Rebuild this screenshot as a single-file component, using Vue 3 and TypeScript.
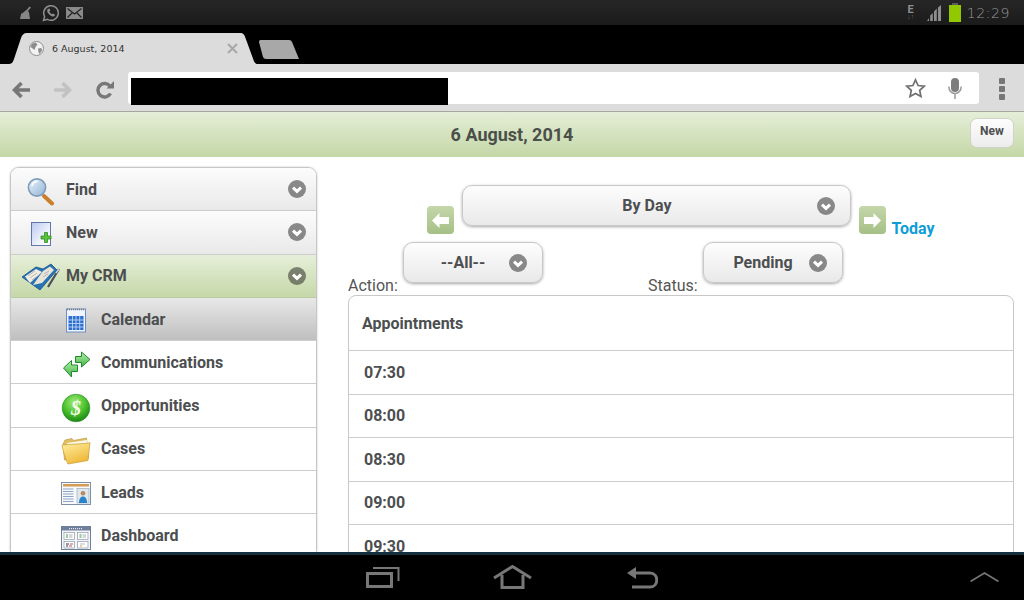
<script setup lang="ts">
const topItems = [
  { label: 'Find', icon: 'find', kind: '' },
  { label: 'New', icon: 'new', kind: '' },
  { label: 'My CRM', icon: 'crm', kind: 'is-open' },
]

const subItems = [
  { label: 'Calendar', icon: 'cal', kind: 'is-current' },
  { label: 'Communications', icon: 'comm', kind: '' },
  { label: 'Opportunities', icon: 'opp', kind: '' },
  { label: 'Cases', icon: 'cases', kind: '' },
  { label: 'Leads', icon: 'leads', kind: '' },
  { label: 'Dashboard', icon: 'dash', kind: '' },
]

const times = ['07:30', '08:00', '08:30', '09:00', '09:30']
</script>

<template>
  <div class="device">
    <!-- shared icon sprite -->
    <svg class="sprite" aria-hidden="true">
      <defs>
        <linearGradient id="g-lens" x1="0" y1="0" x2="1" y2="1">
          <stop offset="0" stop-color="#eaf3fb" />
          <stop offset="1" stop-color="#8fb4d6" />
        </linearGradient>
        <linearGradient id="g-page" x1="0" y1="0" x2="1" y2="1">
          <stop offset="0" stop-color="#b9c8ee" />
          <stop offset="0.7" stop-color="#f6f8fe" />
          <stop offset="1" stop-color="#ffffff" />
        </linearGradient>
        <linearGradient id="g-arrow" x1="0" y1="0" x2="0" y2="1">
          <stop offset="0" stop-color="#b8f0b0" />
          <stop offset="1" stop-color="#3fb33f" />
        </linearGradient>
        <radialGradient id="g-ball" cx="0.45" cy="0.3" r="0.75">
          <stop offset="0" stop-color="#a4ec7c" />
          <stop offset="0.55" stop-color="#49c02c" />
          <stop offset="1" stop-color="#157d12" />
        </radialGradient>
        <linearGradient id="g-folder" x1="0" y1="0" x2="0.5" y2="1">
          <stop offset="0" stop-color="#fff0a4" />
          <stop offset="1" stop-color="#f0b93a" />
        </linearGradient>
        <linearGradient id="g-nav" x1="0" y1="0" x2="0" y2="1">
          <stop offset="0" stop-color="#c2d6a6" />
          <stop offset="1" stop-color="#a3bd82" />
        </linearGradient>
      </defs>

      <symbol id="i-chev" viewBox="0 0 18 18">
        <circle cx="9" cy="9" r="9" fill="#000" fill-opacity="0.44" />
        <path d="M5 7.6 9 11.4 13 7.6" fill="none" stroke="#fff" stroke-width="3" />
      </symbol>

      <symbol id="i-find" viewBox="0 0 40 34">
        <path d="M23 24 31 31.5" stroke="#c97f2c" stroke-width="4" stroke-linecap="round" />
        <circle cx="16" cy="15.5" r="8.6" fill="url(#g-lens)" stroke="#7f9db8" stroke-width="1.6" />
        <path d="M11 14c.6-3 2.800-4.600 5.600-4.600" fill="none" stroke="#fff" stroke-width="1.6" />
      </symbol>

      <symbol id="i-new" viewBox="0 0 40 34">
        <rect x="10.500" y="7.500" width="19" height="23" fill="url(#g-page)" stroke="#5f78a8" />
        <path d="M21 20h3.500v-3.500h3V20H31v3h-3.500v3.500h-3V23H21z" fill="#5cc33c" stroke="#2c8a22" stroke-width=".8" transform="translate(-1 1)" />
      </symbol>

      <symbol id="i-crm" viewBox="0 0 40 34">
        <path d="M1 18 15 8l7 2 8-5 6 6-17 20z" fill="#2774b4" stroke="#174f86" stroke-width=".8" />
        <path d="M4 17.500 15 10l6 3-12 11z" fill="#f2ede0" />
        <path d="M22 12l7-4.500 4 3.500-12 13-9 2z" fill="#e7e4d8" />
        <path d="M7 17l7-5M9 19l7-5M11 21l7-5M23 15l5-3M22 18l5-3" stroke="#a9a9b4" stroke-width=".8" />
        <path d="M38 10 27 28" stroke="#4a4f5c" stroke-width="2.200" />
        <path d="M38 10 35 14" stroke="#c9d4dc" stroke-width="1.400" />
      </symbol>

      <symbol id="i-cal" viewBox="0 0 40 34">
        <rect x="10.500" y="7" width="19" height="23" fill="#f0f4fc" stroke="#6d8ec4" />
        <path d="M11 7.500h18" stroke="#777" stroke-width="1.500" stroke-dasharray="1 1" />
        <rect x="12.500" y="14" width="15" height="14" fill="#2d6fd0" />
        <path d="M12.500 18h15M12.500 21.500h15M12.500 25h15M16.500 14v14M20 14v14M23.700 14v14" stroke="#cfe0f8" stroke-width=".8" />
      </symbol>

      <symbol id="i-comm" viewBox="0 0 40 34">
        <path d="M19.500 11.500h6V7l8.500 7.500-8.500 7.500v-4.500h-6z" fill="url(#g-arrow)" stroke="#1f8a2c" />
        <path d="M21.500 20h-6v-4.500L7.500 23l8 9v-5.500h6z" fill="url(#g-arrow)" stroke="#1f8a2c" />
      </symbol>

      <symbol id="i-opp" viewBox="0 0 40 34">
        <circle cx="20" cy="19" r="13.800" fill="url(#g-ball)" stroke="#1c8a18" stroke-width=".6" />
        <text x="20" y="25.500" text-anchor="middle" class="dollar">$</text>
      </symbol>

      <symbol id="i-cases" viewBox="0 0 40 34">
        <path d="M7 12l2-4 7-1.500 1.500 2 13-2.500 2 20-24 2z" fill="#e2bd62" stroke="#b6923a" stroke-width=".6" />
        <path d="M11 11l20-3-1 16-17 2z" fill="#fdf9e6" />
        <path d="M6 13l22-1.500c3 0 6-1 6-1l-2 18-20 3.500c-3-6-5-13-6-19z" fill="url(#g-folder)" stroke="#c99c34" stroke-width=".7" />
      </symbol>

      <symbol id="i-leads" viewBox="0 0 40 34">
        <rect x="5.500" y="7.500" width="29" height="22" fill="#f7f9fc" stroke="#7f8fa4" />
        <rect x="7" y="9" width="26" height="2.500" fill="#d49c55" />
        <path d="M7 14h10.500M7 16.500h10.500M7 19h10.500M7 21.500h10.500M7 24h10.500M7 26.500h10.500" stroke="#8ea4c4" />
        <rect x="21" y="13.500" width="12" height="14.500" fill="#dfe8f0" stroke="#8ea0b4" stroke-width=".6" />
        <circle cx="27" cy="18.200" r="2.300" fill="#b58a5c" />
        <path d="M23 28c0-5 2-6.500 4-6.500s4 1.500 4 6.500z" fill="#2a82c8" />
      </symbol>

      <symbol id="i-dash" viewBox="0 0 40 34">
        <rect x="5.500" y="7.500" width="29" height="23" fill="#f5f6fa" stroke="#6f7f98" />
        <rect x="6" y="8" width="28" height="3.500" fill="#6f7f9c" />
        <path d="M13 9.700h14" stroke="#fff" stroke-dasharray="1 1" />
        <g fill="#fff" stroke="#8e98a8" stroke-width=".7">
          <rect x="8" y="13.500" width="10.500" height="7" />
          <rect x="21.500" y="13.500" width="10.500" height="7" />
          <rect x="8" y="22.500" width="10.500" height="6.500" />
          <rect x="21.500" y="22.500" width="10.500" height="6.500" />
        </g>
        <path d="M10 16h2M10 18h2M23.500 16h2M23.500 18h2" stroke="#2e9a3c" />
        <path d="M13 16h3.500M13 18h3.500M26.500 16h3.500M26.500 18h3.500" stroke="#a8b0bc" />
        <path d="M10 25h3M10 27h2" stroke="#23304a" />
        <path d="M14 25h3M13 27h3" stroke="#c4504c" />
        <path d="M24 25h5" stroke="#b4bcc8" />
        <path d="M24 27h2" stroke="#e0a030" />
      </symbol>
    </svg>

    <!-- android status bar -->
    <div class="status">
      <div class="status-left">
        <svg width="14" height="14" viewBox="0 0 14 14">
          <path d="M1 13l1-5 3-2 1-1 1.500-1L10.500 0.500l1.500 1-3 3.500 1 1.500 1 6.500z" fill="#858585" />
        </svg>
        <svg width="18" height="18" viewBox="0 0 18 18">
          <path d="M1.500 16.500l1.100-4A7.300 7.300 0 1 1 5.500 15.400z" fill="none" stroke="#8e8e8e" stroke-width="1.500" />
          <path d="M6 5c-1.400 1-1 3 .6 4.800C8.300 11.800 10.500 13 12 12.200c1-.6 1.200-1.400.8-1.800l-1.800-1-1 .9c-1-.4-2-1.400-2.600-2.700l.9-1-.9-2z" fill="#8e8e8e" />
        </svg>
        <svg width="17" height="12" viewBox="0 0 17 12">
          <rect width="17" height="12" fill="#8a8a8a" />
          <path d="M1.500 1.500 8.500 7l7-5.500M1.500 10.500 6.500 5.500M15.500 10.500l-5-5" fill="none" stroke="#222" stroke-width="1.200" />
        </svg>
      </div>
      <div class="status-right">
        <div class="net"><span>E</span><small>↓↑</small></div>
        <svg class="signal" width="17" height="16" viewBox="0 0 17 16">
          <path d="M0 16l2-3v3zM3.200 16v-5.500l2.600-2.500V16zM7 16V6.500l2.800-3V16zM11 16V2.500L14 0v16z" fill="#8d8d8d" />
        </svg>
        <svg class="battery" width="12" height="19" viewBox="0 0 12 19">
          <rect x="3" width="6" height="2" fill="#5d5d5d" />
          <rect y="2" width="12" height="17" fill="#91c800" />
        </svg>
        <span class="clock">12:29</span>
      </div>
    </div>

    <!-- chrome tab strip -->
    <div class="tabs">
      <div class="tab">
        <svg class="tab-bg" width="250" height="31" viewBox="0 0 250 31">
          <path d="M0 31c4 0 5-2 6-5l7-21c1-3 2.500-5 6-5h213c3.500 0 4.500 2 5.500 5l8 22c1 2.500 2 4 4.500 4z" fill="#dcdcdc" />
        </svg>
        <svg class="globe" width="15" height="15" viewBox="0 0 15 15">
          <circle cx="7.500" cy="7.500" r="7" fill="#f2f2f2" stroke="#8c8c8c" />
          <path d="M3 2.800 6.500 1.500l2 2-2 2.500-1 3L3 7 1.500 6zM9 7.500l3.500-.5.500 2.500-2.500 3.500-1-2z" fill="#8c8c8c" />
        </svg>
        <span class="tab-title">6 August, 2014</span>
        <svg class="tab-close" width="11" height="11" viewBox="0 0 11 11">
          <path d="M1 1l9 9M10 1l-9 9" stroke="#a9a9a9" stroke-width="2.200" />
        </svg>
      </div>
      <svg class="new-tab" width="40" height="19" viewBox="0 0 40 19">
        <path d="M0 2c0-1.500 1-2 2-2h28c1.500 0 2.500.8 3 2l7 17H7c-1.500 0-2.400-.8-3-2z" fill="#a8a8a8" />
      </svg>
    </div>

    <!-- chrome toolbar -->
    <div class="toolbar">
      <div class="tool-nav">
        <svg width="18" height="18" viewBox="0 0 18 18">
          <path d="M18 9H3M9.500 2 2.500 9l7 7" fill="none" stroke="#777" stroke-width="3.600" />
        </svg>
        <svg width="18" height="18" viewBox="0 0 18 18">
          <path d="M0 9h15M8.500 2l7 7-7 7" fill="none" stroke="#c2c2c2" stroke-width="3.600" />
        </svg>
        <svg width="18" height="18" viewBox="0 0 18 18">
          <path d="M14.500 12.500A6.700 6.700 0 1 1 14 5.200" fill="none" stroke="#777" stroke-width="3.400" />
          <path d="M10.500 7.500H18V0z" fill="#777" />
        </svg>
      </div>
      <div class="omnibox">
        <div class="redacted"></div>
        <svg width="21" height="20" viewBox="0 0 21 20">
          <path d="M10.500 1.800l2.600 5.700 6.200.7-4.600 4.200 1.300 6.100-5.500-3.100-5.500 3.100 1.300-6.100-4.600-4.200 6.200-.7z" fill="none" stroke="#6f6f6f" stroke-width="1.700" />
        </svg>
        <svg width="14" height="21" viewBox="0 0 14 21">
          <rect x="3" width="8" height="14" rx="4" fill="#7d7d7d" />
          <path d="M.8 8.500c0 4 2.600 7 6.200 7s6.200-3 6.200-7M7 15.500V21" fill="none" stroke="#9a9a9a" stroke-width="1.500" />
        </svg>
      </div>
      <div class="menu-dots"><i></i><i></i><i></i></div>
    </div>

    <div class="page-head">
      <h1>6 August, 2014</h1>
      <button class="new-btn">New</button>
    </div>

    <div class="content">
      <nav class="sidebar">
        <a v-for="item in topItems" :key="item.label" class="row" :class="item.kind">
          <span class="row-icon"><svg width="40" height="34"><use :href="'#i-' + item.icon" /></svg></span>
          <span class="row-label">{{ item.label }}</span>
          <svg class="chev" width="18" height="18"><use href="#i-chev" /></svg>
        </a>
        <a v-for="item in subItems" :key="item.label" class="row sub" :class="item.kind">
          <span class="row-icon"><svg width="40" height="34"><use :href="'#i-' + item.icon" /></svg></span>
          <span class="row-label">{{ item.label }}</span>
        </a>
      </nav>

      <main class="main">
        <div class="period-row">
          <button class="arrow-btn">
            <svg width="17" height="15" viewBox="0 0 17 15"><path d="M0 7.500 7.500 0v4H17v7H7.500v4z" fill="#fff" /></svg>
          </button>
          <div class="select period">
            <span>By Day</span>
            <svg class="select-chev" width="18" height="18"><use href="#i-chev" /></svg>
          </div>
          <button class="arrow-btn">
            <svg width="17" height="15" viewBox="0 0 17 15"><path d="M17 7.500 9.500 0v4H0v7h9.500v4z" fill="#fff" /></svg>
          </button>
          <a class="today">Today</a>
        </div>

        <div class="filter-row">
          <div class="filter">
            <label>Action:</label>
            <div class="select small">
              <span>--All--</span>
              <svg class="select-chev" width="18" height="18"><use href="#i-chev" /></svg>
            </div>
          </div>
          <div class="filter">
            <label>Status:</label>
            <div class="select small">
              <span>Pending</span>
              <svg class="select-chev" width="18" height="18"><use href="#i-chev" /></svg>
            </div>
          </div>
        </div>

        <section class="agenda">
          <div class="agenda-head">Appointments</div>
          <div v-for="t in times" :key="t" class="agenda-row">{{ t }}</div>
        </section>
      </main>
    </div>

    <!-- android nav bar -->
    <div class="navbar">
      <svg class="nav-recent" width="34" height="23" viewBox="0 0 34 23">
        <path d="M1.500 8.500h24v13h-24z" fill="none" stroke="#777" stroke-width="3" />
        <path d="M7 3h25.500v13" fill="none" stroke="#777" stroke-width="2" />
      </svg>
      <svg class="nav-home" width="39" height="24" viewBox="0 0 39 24">
        <path d="M1 13 19.500 1.500 38 13" fill="none" stroke="#777" stroke-width="3" />
        <path d="M9 10v12.500h21V10" fill="none" stroke="#777" stroke-width="3" />
      </svg>
      <svg class="nav-back" width="31" height="22" viewBox="0 0 31 22">
        <path d="M0 6 9 0v12z" fill="#777" />
        <path d="M6 6h17c9 0 9 14 0 14H5" fill="none" stroke="#777" stroke-width="3" />
      </svg>
      <svg class="nav-up" width="29" height="10" viewBox="0 0 29 10">
        <path d="M.5 9.500 14.500 1l14 8.500" fill="none" stroke="#777" stroke-width="1.600" />
      </svg>
    </div>
  </div>
</template>

<style>
html,
body {
  margin: 0;
  background: #fff;
}
</style>

<style scoped>
.device {
  width: 1024px;
  height: 600px;
  display: flex;
  flex-direction: column;
  overflow: hidden;
  font-family: Roboto, "Liberation Sans", sans-serif;
  color: #4c4e50;
  background: #fff;
}

.sprite {
  width: 0;
  height: 0;
  flex: none;
}

.dollar {
  font-family: "Liberation Serif", serif;
  font-style: italic;
  font-weight: 700;
  font-size: 20px;
  fill: #f4fbe8;
}

/* status bar */
.status {
  height: 25px;
  flex: none;
  display: flex;
  justify-content: space-between;
  background: linear-gradient(180deg, #262626, #1b1b1b);
}

.status-left {
  display: flex;
  align-items: center;
  gap: 6px;
  padding-left: 19px;
}

.status-left svg:first-child {
  margin-right: 3px;
}

.status-right {
  display: flex;
  align-items: center;
  padding-right: 14px;
}

.net {
  width: 8px;
  margin-right: 12px;
  display: flex;
  flex-direction: column;
  align-items: center;
  color: #8e8e8e;
  font-size: 11px;
  font-weight: 700;
  line-height: 9px;
}

.net small {
  font-size: 7px;
  line-height: 7px;
  color: #666;
}

.signal {
  margin-right: 5px;
}

.battery {
  margin-right: 6px;
}

.clock {
  font-family: "DejaVu Sans", sans-serif;
  font-size: 14px;
  font-weight: 200;
  letter-spacing: 0.6px;
  color: #9a9a9a;
}

/* tab strip */
.tabs {
  height: 39px;
  flex: none;
  background: #000;
  display: flex;
  align-items: flex-end;
  padding-left: 8px;
}

.tab {
  position: relative;
  width: 250px;
  height: 31px;
  display: flex;
  align-items: center;
  padding-left: 21px;
  box-sizing: border-box;
}

.tab-bg {
  position: absolute;
  left: 0;
  top: 0;
}

.globe,
.tab-title,
.tab-close {
  position: relative;
}

.tab-title {
  margin-left: 8px;
  font-family: "DejaVu Sans", sans-serif;
  font-size: 9.500px;
  color: #333;
}

.tab-close {
  margin-left: auto;
  margin-right: 20px;
}

.new-tab {
  margin: 0 0 5px 1px;
}

/* toolbar */
.toolbar {
  height: 48px;
  flex: none;
  box-sizing: border-box;
  display: flex;
  align-items: flex-start;
  padding: 8px 0 0 12px;
  background: #dcdcdc;
  border-bottom: 1px solid #a3a89f;
}

.tool-nav {
  display: flex;
  gap: 24px;
  padding-top: 9px;
}

.omnibox {
  position: relative;
  width: 851px;
  height: 32px;
  margin-left: 14px;
  box-sizing: border-box;
  display: flex;
  align-items: center;
  justify-content: flex-end;
  gap: 22px;
  padding-right: 17px;
  background: #fff;
  border-radius: 3px;
}

.redacted {
  position: absolute;
  left: 3px;
  top: 6px;
  width: 317px;
  height: 27px;
  background: #000;
}

.menu-dots {
  display: flex;
  flex-direction: column;
  gap: 2px;
  margin: 6px 0 0 20px;
}

.menu-dots i {
  width: 6px;
  height: 6px;
  border-radius: 1px;
  background: #777;
}

/* page header */
.page-head {
  position: relative;
  height: 45px;
  flex: none;
  display: flex;
  align-items: center;
  justify-content: center;
  background: linear-gradient(180deg, #e5eed8, #c4d7a6);
}

.page-head h1 {
  margin: 0;
  font-size: 18px;
  font-weight: 700;
  color: #4a4f4a;
}

.new-btn {
  position: absolute;
  right: 10px;
  top: 6px;
  width: 44px;
  height: 30px;
  padding: 0 0 4px;
  border: 1px solid #cfd3c9;
  border-radius: 7px;
  background: linear-gradient(180deg, #fdfdfd, #ececec);
  font-family: inherit;
  font-size: 12px;
  font-weight: 700;
  color: #4c4e50;
}

/* body */
.content {
  flex: 1;
  min-height: 0;
  overflow: hidden;
  display: flex;
  align-items: flex-start;
  padding: 10px 10px 0;
}

.sidebar {
  width: 307px;
  flex: none;
  box-sizing: border-box;
  border: 1px solid #c6c6c6;
  border-radius: 9px;
  overflow: hidden;
  box-shadow: 0 0 2px rgba(0, 0, 0, 0.25);
  margin-bottom: 2px;
}

.row {
  height: 43.300px;
  box-sizing: border-box;
  display: flex;
  align-items: center;
  padding: 0 10px 0 5px;
  border-bottom: 1px solid #cdcdcd;
  background: linear-gradient(180deg, #fcfcfc, #e9e9e9);
  font-size: 16px;
  font-weight: 700;
}

.row.sub {
  padding-left: 40px;
  background: #fff;
}

.row.is-open {
  background: linear-gradient(180deg, #e6efd9, #c5d8a8);
  border-bottom-color: #bccaa8;
}

.row.sub.is-current {
  background: linear-gradient(180deg, #e8e8e8, #bfbfbf);
}

.row-icon {
  width: 50px;
  flex: none;
  display: flex;
  justify-content: center;
}

.row-icon svg {
  display: block;
}

.row-label {
  flex: 1;
}

.main {
  flex: 1;
  min-width: 0;
  margin-left: 31px;
}

.period-row {
  display: flex;
  align-items: flex-end;
  justify-content: center;
  gap: 8px;
  margin-top: 18px;
}

.arrow-btn {
  width: 27px;
  height: 28px;
  padding: 0;
  border: 0;
  border-radius: 4px;
  display: flex;
  align-items: center;
  justify-content: center;
  background: url() , linear-gradient(180deg, #c4d7ab, #a5bf85);
}

.select {
  position: relative;
  height: 41px;
  box-sizing: border-box;
  display: flex;
  align-items: center;
  justify-content: center;
  padding: 0 35px 0 15px;
  border: 1px solid #c8c8c8;
  border-radius: 10px;
  background: linear-gradient(180deg, #fdfdfd, #e9e9e9);
  box-shadow: 0 1px 3px rgba(0, 0, 0, 0.35);
  font-size: 16px;
  font-weight: 700;
}

.select-chev {
  position: absolute;
  right: 15px;
  top: 11px;
}

.period {
  width: 389px;
  margin-bottom: 8px;
}

.today {
  margin: 0 0 -4px -3px;
  font-size: 16px;
  font-weight: 700;
  line-height: 19px;
  color: #0f9dd6;
}

.filter-row {
  display: grid;
  grid-template-columns: 300px 300px;
  margin-top: 8px;
}

.filter {
  display: flex;
  align-items: flex-end;
}

.filter label {
  width: 55px;
  flex: none;
  font-size: 16px;
  line-height: 19px;
  color: #555;
}

.select.small {
  width: 140px;
  margin-bottom: 12px;
}

.agenda {
  border: 1px solid #c8c8c8;
  border-radius: 8px;
  font-size: 16px;
  font-weight: 700;
}

.agenda-head {
  height: 55px;
  box-sizing: border-box;
  display: flex;
  align-items: center;
  padding-left: 13px;
  border-bottom: 1px solid #cdcdcd;
}

.agenda-row {
  height: 43.500px;
  box-sizing: border-box;
  display: flex;
  align-items: center;
  padding-left: 15px;
  border-bottom: 1px solid #cdcdcd;
}

/* nav bar */
.navbar {
  height: 48px;
  flex: none;
  box-sizing: border-box;
  display: flex;
  align-items: flex-start;
  padding-left: 366px;
  background: #000;
  border-top: 3px solid #14303f;
}

.nav-recent {
  margin-top: 10px;
}

.nav-home {
  margin: 10px 0 0 93px;
}

.nav-back {
  margin: 12px 0 0 95px;
}

.nav-up {
  margin: 17px 25px 0 auto;
}
</style>
